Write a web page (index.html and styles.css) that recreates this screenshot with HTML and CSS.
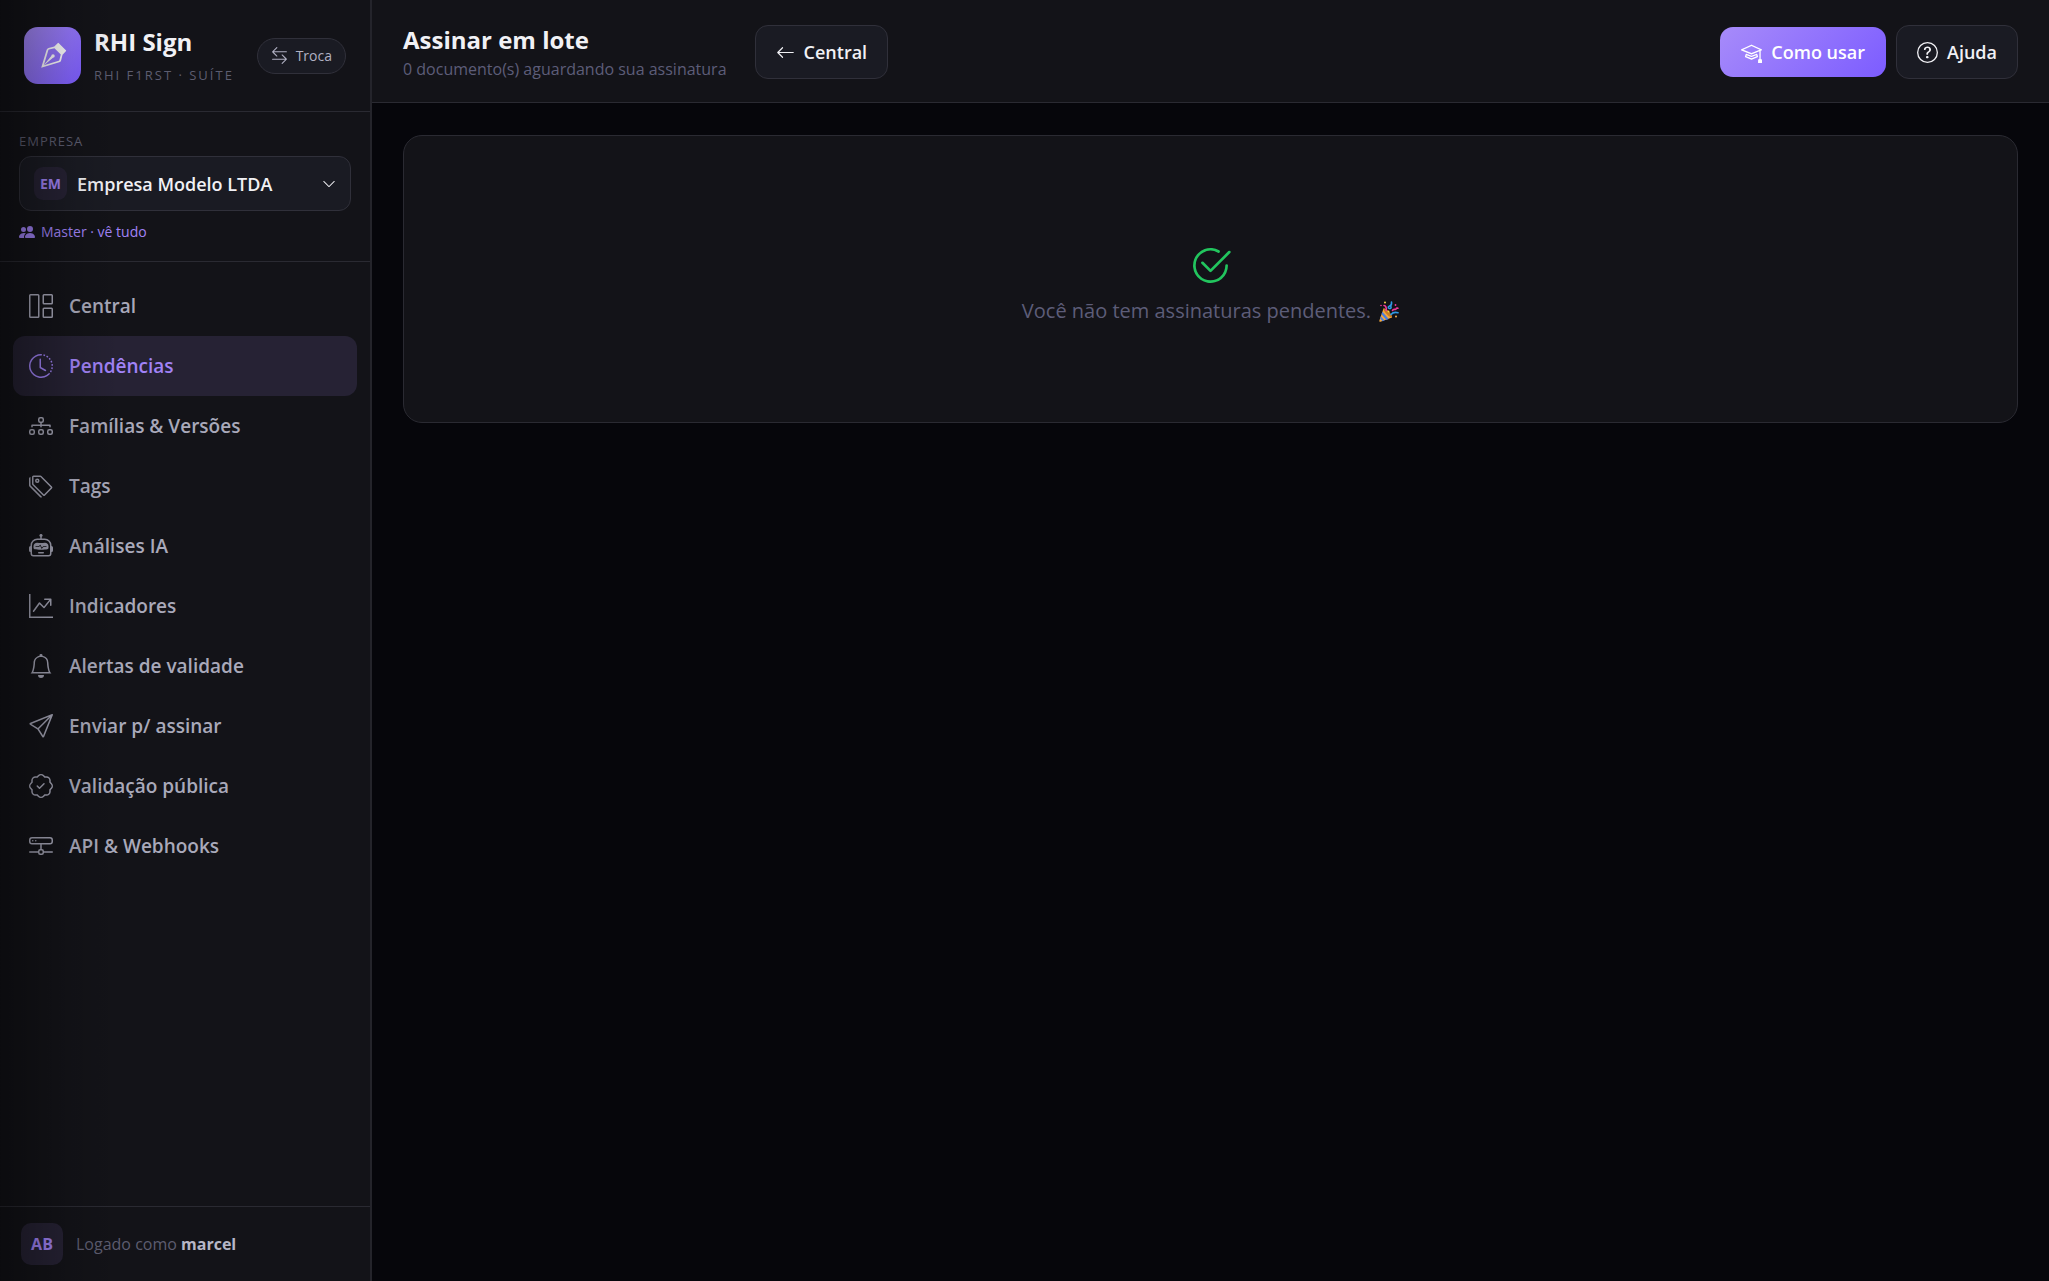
FILE: index.html
```html
<!DOCTYPE html>
<html lang="pt-BR">
<head>
    <meta charset="utf-8">
    <meta name="viewport" content="width=device-width, initial-scale=1">
    <title>Assinar em lote</title>
    <link rel="stylesheet" href="styles.css">
</head>
<body>
    <div class="layout">
        <aside class="sidebar">
            <div class="brand">
                <div class="brand-logo">
                    <svg class="icon" viewBox="0 0 16 16"><path fill-rule="evenodd" d="M10.646.646a.5.5 0 0 1 .708 0l4 4a.5.5 0 0 1 0 .708l-1.902 1.902-.829 3.313a1.5 1.5 0 0 1-1.024 1.073L1.254 14.746 4.358 4.4A1.5 1.5 0 0 1 5.43 3.377l3.313-.828zm-1.8 2.908-3.173.793a.5.5 0 0 0-.358.342l-2.57 8.565 8.567-2.57a.5.5 0 0 0 .34-.357l.794-3.174-3.6-3.6z"/><path d="M2.832 13.228 8 9a1 1 0 1 0-1-1l-4.228 5.168-.026.086z"/></svg>
                </div>
                <div class="brand-text">
                    <div class="brand-name">RHI Sign</div>
                    <div class="brand-sub">RHI F1RST · SUÍTE</div>
                </div>
                <button type="button" class="swap-button">
                    <svg class="icon" viewBox="0 0 16 16"><path d="M1 11.5a.5.5 0 0 0 .5.5h11.793l-3.147 3.146a.5.5 0 0 0 .708.708l4-4a.5.5 0 0 0 0-.708l-4-4a.5.5 0 0 0-.708.708L13.293 11H1.5a.5.5 0 0 0-.5.5m14-7a.5.5 0 0 1-.5.5H2.707l3.147 3.146a.5.5 0 1 1-.708.708l-4-4a.5.5 0 0 1 0-.708l4-4a.5.5 0 1 1 .708.708L2.707 4H14.5a.5.5 0 0 1 .5.5"/></svg>
                    Troca
                </button>
            </div>

            <div class="company">
                <label class="company-label" for="company">EMPRESA</label>
                <div class="company-box">
                    <span class="company-tag">EM</span>
                    <select id="company" class="company-select" name="company">
                        <option>Empresa Modelo LTDA</option>
                    </select>
                    <svg class="icon" viewBox="0 0 16 16"><path d="M1.646 4.646a.5.5 0 0 1 .708 0L8 10.293l5.646-5.647a.5.5 0 0 1 .708.708l-6 6a.5.5 0 0 1-.708 0l-6-6a.5.5 0 0 1 0-.708"/></svg>
                </div>
                <div class="company-role">
                    <svg class="icon" viewBox="0 0 16 16"><path d="M7 14s-1 0-1-1 1-4 5-4 5 3 5 4-1 1-1 1zm4-6a3 3 0 1 0 0-6 3 3 0 0 0 0 6m-5.784 6A2.24 2.24 0 0 1 5 13c0-1.355.68-2.75 1.936-3.72A6.3 6.3 0 0 0 5 9c-4 0-5 3-5 4s1 1 1 1zM4.5 8a2.5 2.5 0 1 0 0-5 2.5 2.5 0 0 0 0 5"/></svg>
                    Master · vê tudo
                </div>
            </div>

            <nav class="menu">
                <a class="menu-item" href="#">
                    <svg class="icon" viewBox="0 0 16 16"><path d="M6 1H1v14h5zm9 0h-5v5h5zm0 9v5h-5v-5zM0 1a1 1 0 0 1 1-1h5a1 1 0 0 1 1 1v14a1 1 0 0 1-1 1H1a1 1 0 0 1-1-1zm9 0a1 1 0 0 1 1-1h5a1 1 0 0 1 1 1v5a1 1 0 0 1-1 1h-5a1 1 0 0 1-1-1zm1 8a1 1 0 0 0-1 1v5a1 1 0 0 0 1 1h5a1 1 0 0 0 1-1v-5a1 1 0 0 0-1-1z"/></svg>
                    Central
                </a>
                <a class="menu-item active" href="#">
                    <svg class="icon" viewBox="0 0 16 16"><path d="M8.515 1.019A7 7 0 0 0 8 1V0a8 8 0 0 1 .589.022zm2.004.45a7 7 0 0 0-.985-.299l.219-.976q.576.129 1.126.342zm1.37.71a7 7 0 0 0-.439-.27l.493-.87a8 8 0 0 1 .979.654l-.615.789a7 7 0 0 0-.418-.302zm1.834 1.79a7 7 0 0 0-.653-.796l.724-.69q.406.429.747.91zm.744 1.352a7 7 0 0 0-.214-.468l.893-.45a8 8 0 0 1 .45 1.088l-.95.313a7 7 0 0 0-.179-.483m.53 2.507a7 7 0 0 0-.1-1.025l.985-.17q.1.58.116 1.17zm-.131 1.538q.05-.254.081-.51l.993.123a8 8 0 0 1-.23 1.155l-.964-.267q.069-.247.12-.501m-.952 2.379q.276-.436.486-.908l.914.405q-.24.54-.555 1.038zm-.964 1.205q.183-.183.35-.378l.758.653a8 8 0 0 1-.401.432z"/><path d="M8 1a7 7 0 1 0 4.95 11.95l.707.707A8.001 8.001 0 1 1 8 0z"/><path d="M7.5 3a.5.5 0 0 1 .5.5v5.21l3.248 1.856a.5.5 0 0 1-.496.868l-3.5-2A.5.5 0 0 1 7 9V3.5a.5.5 0 0 1 .5-.5"/></svg>
                    Pendências
                </a>
                <a class="menu-item" href="#">
                    <svg class="icon" viewBox="0 0 16 16"><path fill-rule="evenodd" d="M6 3.5A1.5 1.5 0 0 1 7.5 2h1A1.5 1.5 0 0 1 10 3.5v1A1.5 1.5 0 0 1 8.5 6v1H14a.5.5 0 0 1 .5.5v1a.5.5 0 0 1-1 0V8h-5v.5a.5.5 0 0 1-1 0V8h-5v.5a.5.5 0 0 1-1 0v-1A.5.5 0 0 1 2 7h5.5V6A1.5 1.5 0 0 1 6 4.5zM8.5 5a.5.5 0 0 0 .5-.5v-1a.5.5 0 0 0-.5-.5h-1a.5.5 0 0 0-.5.5v1a.5.5 0 0 0 .5.5zM0 11.5A1.5 1.5 0 0 1 1.5 10h1A1.5 1.5 0 0 1 4 11.5v1A1.5 1.5 0 0 1 2.5 14h-1A1.5 1.5 0 0 1 0 12.5zm1.5-.5a.5.5 0 0 0-.5.5v1a.5.5 0 0 0 .5.5h1a.5.5 0 0 0 .5-.5v-1a.5.5 0 0 0-.5-.5zm4.5.5A1.5 1.5 0 0 1 7.5 10h1a1.5 1.5 0 0 1 1.5 1.5v1A1.5 1.5 0 0 1 8.5 14h-1A1.5 1.5 0 0 1 6 12.5zm1.5-.5a.5.5 0 0 0-.5.5v1a.5.5 0 0 0 .5.5h1a.5.5 0 0 0 .5-.5v-1a.5.5 0 0 0-.5-.5zm4.5.5a1.5 1.5 0 0 1 1.5-1.5h1a1.5 1.5 0 0 1 1.5 1.5v1a1.5 1.5 0 0 1-1.5 1.5h-1a1.5 1.5 0 0 1-1.5-1.5zm1.5-.5a.5.5 0 0 0-.5.5v1a.5.5 0 0 0 .5.5h1a.5.5 0 0 0 .5-.5v-1a.5.5 0 0 0-.5-.5z"/></svg>
                    Famílias &amp; Versões
                </a>
                <a class="menu-item" href="#">
                    <svg class="icon" viewBox="0 0 16 16"><path d="M3 2v4.586l7 7L14.586 9l-7-7zM2 2a1 1 0 0 1 1-1h4.586a1 1 0 0 1 .707.293l7 7a1 1 0 0 1 0 1.414l-4.586 4.586a1 1 0 0 1-1.414 0l-7-7A1 1 0 0 1 2 6.586z"/><path d="M5.5 5a.5.5 0 1 1 0-1 .5.5 0 0 1 0 1m0 1a1.5 1.5 0 1 0 0-3 1.5 1.5 0 0 0 0 3M1 7.086a1 1 0 0 0 .293.707L8.75 15.25l-.043.043a1 1 0 0 1-1.414 0l-7-7A1 1 0 0 1 0 7.586V3a1 1 0 0 1 1-1z"/></svg>
                    Tags
                </a>
                <a class="menu-item" href="#">
                    <svg class="icon" viewBox="0 0 16 16"><path d="M6 12.5a.5.5 0 0 1 .5-.5h3a.5.5 0 0 1 0 1h-3a.5.5 0 0 1-.5-.5M3 8.062C3 6.76 4.235 5.765 5.53 5.886a26.6 26.6 0 0 0 4.94 0C11.765 5.765 13 6.76 13 8.062v1.157a.93.93 0 0 1-.765.935c-.845.147-2.34.346-4.235.346s-3.39-.2-4.235-.346A.93.93 0 0 1 3 9.219zm4.542-.827a.25.25 0 0 0-.217.068l-.92.9a25 25 0 0 1-1.871-.183.25.25 0 0 0-.068.495c.55.076 1.232.149 2.02.193a.25.25 0 0 0 .189-.071l.754-.736.847 1.71a.25.25 0 0 0 .404.062l.932-.97a25 25 0 0 0 1.922-.188.25.25 0 0 0-.068-.495c-.538.074-1.207.145-1.98.189a.25.25 0 0 0-.166.076l-.754.785-.842-1.7a.25.25 0 0 0-.182-.135"/><path d="M8.5 1.866a1 1 0 1 0-1 0V3h-2A4.5 4.5 0 0 0 1 7.5V8a1 1 0 0 0-1 1v2a1 1 0 0 0 1 1v1a2 2 0 0 0 2 2h10a2 2 0 0 0 2-2v-1a1 1 0 0 0 1-1V9a1 1 0 0 0-1-1v-.5A4.5 4.5 0 0 0 10.5 3h-2zM14 7.5V13a1 1 0 0 1-1 1H3a1 1 0 0 1-1-1V7.5A3.5 3.5 0 0 1 5.5 4h5A3.5 3.5 0 0 1 14 7.5"/></svg>
                    Análises IA
                </a>
                <a class="menu-item" href="#">
                    <svg class="icon" viewBox="0 0 16 16"><path fill-rule="evenodd" d="M0 0h1v15h15v1H0zm10 3.5a.5.5 0 0 1 .5-.5h4a.5.5 0 0 1 .5.5v4a.5.5 0 0 1-1 0V4.9l-3.613 4.417a.5.5 0 0 1-.74.037L7.06 6.767l-3.656 5.027a.5.5 0 0 1-.808-.588l4-5.5a.5.5 0 0 1 .758-.06l2.609 2.61L13.445 4H10.5a.5.5 0 0 1-.5-.5"/></svg>
                    Indicadores
                </a>
                <a class="menu-item" href="#">
                    <svg class="icon" viewBox="0 0 16 16"><path d="M8 16a2 2 0 0 0 2-2H6a2 2 0 0 0 2 2M8 1.918l-.797.161A4 4 0 0 0 4 6c0 .628-.134 2.197-.459 3.742-.16.767-.376 1.566-.663 2.258h10.244c-.287-.692-.502-1.49-.663-2.258C12.134 8.197 12 6.628 12 6a4 4 0 0 0-3.203-3.92zM14.22 12c.223.447.481.801.78 1H1c.299-.199.557-.553.78-1C2.68 10.2 3 6.88 3 6c0-2.42 1.72-4.44 4.005-4.901a1 1 0 1 1 1.99 0A5 5 0 0 1 13 6c0 .88.32 4.2 1.22 6"/></svg>
                    Alertas de validade
                </a>
                <a class="menu-item" href="#">
                    <svg class="icon" viewBox="0 0 16 16"><path d="M15.854.146a.5.5 0 0 1 .11.54l-5.819 14.547a.75.75 0 0 1-1.329.124l-3.178-4.995L.643 7.184a.75.75 0 0 1 .124-1.33L15.314.037a.5.5 0 0 1 .54.11ZM6.636 10.07l2.761 4.338L14.13 2.576zm6.787-8.201L1.591 6.602l4.339 2.76z"/></svg>
                    Enviar p/ assinar
                </a>
                <a class="menu-item" href="#">
                    <svg class="icon" viewBox="0 0 16 16"><path d="M10.354 6.146a.5.5 0 0 1 0 .708l-3 3a.5.5 0 0 1-.708 0l-1.5-1.5a.5.5 0 1 1 .708-.708L7 8.793l2.646-2.647a.5.5 0 0 1 .708 0"/><path d="m10.273 2.513-.921-.944.715-.698.622.637.89-.011a2.89 2.89 0 0 1 2.924 2.924l-.01.89.636.622a2.89 2.89 0 0 1 0 4.134l-.637.622.011.89a2.89 2.89 0 0 1-2.924 2.924l-.89-.01-.622.636a2.89 2.89 0 0 1-4.134 0l-.622-.637-.89.011a2.89 2.89 0 0 1-2.924-2.924l.01-.89-.636-.622a2.89 2.89 0 0 1 0-4.134l.637-.622-.011-.89a2.89 2.89 0 0 1 2.924-2.924l.89.01.622-.636a2.89 2.89 0 0 1 4.134 0l-.715.698a1.89 1.89 0 0 0-2.704 0l-.92.944-1.32-.016a1.89 1.89 0 0 0-1.911 1.912l.016 1.318-.944.921a1.89 1.89 0 0 0 0 2.704l.944.92-.016 1.32a1.89 1.89 0 0 0 1.912 1.911l1.318-.016.921.944a1.89 1.89 0 0 0 2.704 0l.92-.944 1.32.016a1.89 1.89 0 0 0 1.911-1.912l-.016-1.318.944-.921a1.89 1.89 0 0 0 0-2.704l-.944-.92.016-1.32a1.89 1.89 0 0 0-1.912-1.911z"/></svg>
                    Validação pública
                </a>
                <a class="menu-item" href="#">
                    <svg class="icon" viewBox="0 0 16 16"><path d="M4.5 5a.5.5 0 1 0 0-1 .5.5 0 0 0 0 1M3 4.5a.5.5 0 1 1-1 0 .5.5 0 0 1 1 0"/><path d="M0 4a2 2 0 0 1 2-2h12a2 2 0 0 1 2 2v1a2 2 0 0 1-2 2H8.5v3a1.5 1.5 0 0 1 1.5 1.5h5.5a.5.5 0 0 1 0 1H10A1.5 1.5 0 0 1 8.5 14h-1A1.5 1.5 0 0 1 6 12.5H.5a.5.5 0 0 1 0-1H6A1.5 1.5 0 0 1 7.5 10V7H2a2 2 0 0 1-2-2zm1 0v1a1 1 0 0 0 1 1h12a1 1 0 0 0 1-1V4a1 1 0 0 0-1-1H2a1 1 0 0 0-1 1m6 7.5v1a.5.5 0 0 0 .5.5h1a.5.5 0 0 0 .5-.5v-1a.5.5 0 0 0-.5-.5h-1a.5.5 0 0 0-.5.5"/></svg>
                    API &amp; Webhooks
                </a>
            </nav>

            <div class="user">
                <span class="user-avatar">AB</span>
                <span>Logado como <strong>marcel</strong></span>
            </div>
        </aside>

        <div class="page">
            <header class="topbar">
                <div>
                    <h1 class="page-title">Assinar em lote</h1>
                    <p class="page-sub">0 documento(s) aguardando sua assinatura</p>
                </div>
                <a class="btn" href="#">
                    <svg class="icon" viewBox="0 0 16 16"><path d="M15 8a.5.5 0 0 0-.5-.5H2.707l3.147-3.146a.5.5 0 1 0-.708-.708l-4 4a.5.5 0 0 0 0 .708l4 4a.5.5 0 0 0 .708-.708L2.707 8.5H14.5A.5.5 0 0 0 15 8"/></svg>
                    Central
                </a>
                <div class="topbar-actions">
                    <button type="button" class="btn btn-primary">
                        <svg class="icon" viewBox="0 0 16 16"><path d="M8.211 2.047a.5.5 0 0 0-.422 0l-7.5 3.5a.5.5 0 0 0 .025.917l7.5 3a.5.5 0 0 0 .372 0L14 7.14V13a1 1 0 0 0-1 1v2h3v-2a1 1 0 0 0-1-1V6.739l.686-.275a.5.5 0 0 0 .025-.917zM8 8.46 1.758 5.965 8 3.052l6.242 2.913z"/><path d="M4.176 9.032a.5.5 0 0 0-.656.327l-.5 1.7a.5.5 0 0 0 .294.605l4.5 1.8a.5.5 0 0 0 .372 0l4.5-1.8a.5.5 0 0 0 .294-.605l-.5-1.7a.5.5 0 0 0-.656-.327L8 10.466zm-.068 1.873.22-.748 3.496 1.311a.5.5 0 0 0 .312 0l3.496-1.311.22.748L8 12.46z"/></svg>
                        Como usar
                    </button>
                    <button type="button" class="btn">
                        <svg class="icon" viewBox="0 0 16 16"><path d="M8 15A7 7 0 1 1 8 1a7 7 0 0 1 0 14m0 1A8 8 0 1 0 8 0a8 8 0 0 0 0 16"/><path d="M5.255 5.786a.237.237 0 0 0 .241.247h.825c.138 0 .248-.113.266-.25.09-.656.54-1.134 1.342-1.134.686 0 1.314.343 1.314 1.168 0 .635-.374.927-.965 1.371-.673.489-1.206 1.06-1.168 1.987l.003.217a.25.25 0 0 0 .25.246h.811a.25.25 0 0 0 .25-.25v-.105c0-.718.273-.927 1.01-1.486.609-.463 1.244-.977 1.244-2.056 0-1.511-1.276-2.241-2.673-2.241-1.267 0-2.655.59-2.75 2.286m1.557 5.763c0 .533.425.927 1.01.927.609 0 1.028-.394 1.028-.927 0-.552-.42-.94-1.029-.94-.584 0-1.009.388-1.009.94"/></svg>
                        Ajuda
                    </button>
                </div>
            </header>

            <main class="content">
                <section class="card">
                    <svg class="icon card-icon" viewBox="0 0 16 16"><path d="M2.5 8a5.5 5.5 0 0 1 8.25-4.764.5.5 0 0 0 .5-.866A6.5 6.5 0 1 0 14.5 8a.5.5 0 0 0-1 0 5.5 5.5 0 1 1-11 0"/><path d="M15.354 3.354a.5.5 0 0 0-.708-.708L8 9.293 5.354 6.646a.5.5 0 1 0-.708.708l3 3a.5.5 0 0 0 .708 0z"/></svg>
                    <p class="card-text">
                        Você não tem assinaturas pendentes.
                        <svg class="party" viewBox="0 0 20 21">
                            <path fill="#f5a93c" d="M4.5 7.5C8 8 12.5 12.5 13 16.5L1.5 20.8C.6 21 .1 20.4.4 19.6z"/>
                            <path fill="#4c7fe0" d="M3.4 10.7 9.7 18l-2.3.9L2.5 13.2zM1.8 15.3l3.8 4.3-2 .7-2.5-2.9z"/>
                            <path fill="#c77a24" d="M4.5 7.5c2-.8 8.8 5.5 8.5 9-1.5 1-9-6-8.5-9z"/>
                            <g fill="none" stroke-width="1.6" stroke-linecap="round">
                                <path stroke="#f0389b" d="M5 4.5c2 .3 2.5 2.500 2.3 5M13.500 9.5c1-2.300 3-.2 3.500-1.500s1.300-.8 2-.8"/>
                                <path stroke="#2f9ae6" d="M12.500 1c.3 2-.3 3.500-1.800 4S8.500 7 10.500 7.500 12.500 5 11 4.500M12 13.500c2-2.500 4.500-2.500 7-1.800"/>
                            </g>
                            <circle cx="6" cy="1.5" r="1" fill="#f7d04a"/>
                            <circle cx="17" cy="15.5" r="1" fill="#f7b04a"/>
                            <circle cx="2" cy="4.5" r=".8" fill="#f0389b"/>
                            <circle cx="16.5" cy="4" r=".9" fill="#f0389b"/>
                            <circle cx="9.5" cy="10.5" r="1" fill="#f7d04a"/>
                        </svg>
                    </p>
                </section>
            </main>
        </div>
    </div>
</body>
</html>
```

FILE: styles.css
```css
* {
    box-sizing: border-box;
}

body {
    margin: 0;
    background-color: #06060b;
    color: #f1f1f5;
    font-family: "Segoe UI", "Open Sans", "Noto Sans", sans-serif;
    font-size: 18px;
}

button,
select {
    font-family: inherit;
    cursor: pointer;
}

a {
    text-decoration: none;
}

.icon {
    width: 1em;
    height: 1em;
    fill: currentColor;
    flex-shrink: 0;
}

.layout {
    display: flex;
    min-height: 100vh;
}

/* Sidebar */
.sidebar {
    position: relative;
    display: flex;
    flex-direction: column;
    flex-shrink: 0;
    width: 372px;
    background-color: #131318;
    border-right: 2px solid #24242b;
}

/* Dark fade on the left edge */
.sidebar::after {
    content: "";
    position: absolute;
    top: 0;
    bottom: 0;
    left: 0;
    width: 120px;
    background: linear-gradient(to right, rgba(0, 0, 0, 0.4), rgba(0, 0, 0, 0.1) 60%, rgba(0, 0, 0, 0));
    pointer-events: none;
}

.brand {
    display: flex;
    align-items: center;
    gap: 13px;
    height: 112px;
    padding: 0 24px;
    border-bottom: 1px solid #2a2a32;
}

.brand-logo {
    display: flex;
    align-items: center;
    justify-content: center;
    width: 57px;
    height: 57px;
    border-radius: 14px;
    background: linear-gradient(135deg, #a78bfa, #7c5cff);
    color: #fff;
    font-size: 28px;
}

.brand-text {
    flex: 1;
}

.brand-name {
    font-size: 24px;
    font-weight: 700;
    line-height: 32px;
}

.brand-sub {
    margin-top: 6px;
    color: #5d5d70;
    font-size: 13px;
    line-height: 22px;
    letter-spacing: 2px;
    white-space: nowrap;
}

.swap-button {
    display: flex;
    align-items: center;
    gap: 8px;
    height: 36px;
    padding: 0 13px;
    border: 1px solid #30303a;
    border-radius: 18px;
    background-color: #1a1b23;
    color: #b0b0c2;
    font-size: 14px;
}

.swap-button .icon {
    font-size: 17px;
}

/* Company picker */
.company {
    padding: 18px 19px;
    border-bottom: 1px solid #2a2a32;
}

.company-label {
    display: block;
    color: #5d5d70;
    font-size: 13px;
    line-height: 22px;
    letter-spacing: 1px;
}

.company-box {
    display: flex;
    align-items: center;
    gap: 10px;
    height: 55px;
    margin-top: 4px;
    padding: 0 14px;
    border: 1px solid #30303a;
    border-radius: 12px;
    background-color: #1a1b23;
}

.company-box .icon {
    font-size: 14px;
}

.company-tag,
.user-avatar {
    display: flex;
    align-items: center;
    justify-content: center;
    background-color: #262234;
    color: #a183f7;
    font-weight: 700;
}

.company-tag {
    width: 33px;
    height: 33px;
    border-radius: 9px;
    font-size: 14px;
}

.company-select {
    flex: 1;
    min-width: 0;
    padding: 0;
    border: none;
    outline: none;
    appearance: none;
    background: none;
    color: #f1f1f5;
    font-size: 18px;
    font-weight: 600;
}

.company-role {
    display: flex;
    align-items: center;
    gap: 6px;
    margin-top: 10px;
    color: #a183f7;
    font-size: 14px;
    line-height: 22px;
}

.company-role .icon {
    font-size: 16px;
}

/* Menu */
.menu {
    flex: 1;
    padding: 14px 13px;
}

.menu-item {
    display: flex;
    align-items: center;
    gap: 16px;
    height: 60px;
    padding: 0 16px;
    border-radius: 12px;
    color: #a9a9ba;
    font-size: 19px;
    font-weight: 600;
}

.menu-item .icon {
    font-size: 24px;
}

.menu-item.active {
    background-color: #262234;
    color: #a183f7;
}

/* Logged user */
.user {
    display: flex;
    align-items: center;
    gap: 13px;
    height: 75px;
    padding: 0 21px;
    border-top: 1px solid #2a2a32;
    color: #5d5d70;
    font-size: 16px;
}

.user strong {
    color: #b6b6c6;
}

.user-avatar {
    width: 42px;
    height: 42px;
    border-radius: 10px;
    font-size: 16px;
}

/* Top bar */
.page {
    flex: 1;
    min-width: 0;
}

.topbar {
    display: flex;
    align-items: center;
    gap: 28px;
    height: 103px;
    padding: 2px 31px 0;
    border-bottom: 1px solid #2a2a32;
    background-color: #131318;
}

.page-title {
    margin: 0;
    font-size: 24px;
    font-weight: 700;
    line-height: 32px;
}

.page-sub {
    margin: 2px 0 0;
    color: #5d5d78;
    font-size: 16px;
    line-height: 22px;
}

.topbar-actions {
    display: flex;
    align-items: center;
    gap: 10px;
    margin-left: auto;
}

.btn {
    display: flex;
    align-items: center;
    gap: 9px;
    height: 54px;
    padding: 0 20px;
    border: 1px solid #30303a;
    border-radius: 13px;
    background-color: #1a1b23;
    color: #f1f1f5;
    font-size: 18px;
    font-weight: 600;
}

.btn .icon {
    font-size: 19px;
}

.topbar-actions .icon {
    font-size: 21px;
}

.btn-primary {
    height: 50px;
    padding: 0 21px;
    border: none;
    background: linear-gradient(135deg, #a78bfa, #7c5cff);
    color: #fff;
}

/* Content */
.content {
    padding: 32px 31px;
}

.card {
    display: flex;
    flex-direction: column;
    align-items: center;
    padding: 108px 24px 95px;
    border: 1px solid #2a2a32;
    border-radius: 19px;
    background-color: #131318;
}

.card-icon {
    color: #22c55e;
    font-size: 43px;
}

.card-text {
    display: flex;
    align-items: center;
    gap: 8px;
    margin: 8px 0 0;
    color: #5d5d78;
    font-size: 20px;
    line-height: 32px;
}

.party {
    width: 20px;
    height: 21px;
}
```
